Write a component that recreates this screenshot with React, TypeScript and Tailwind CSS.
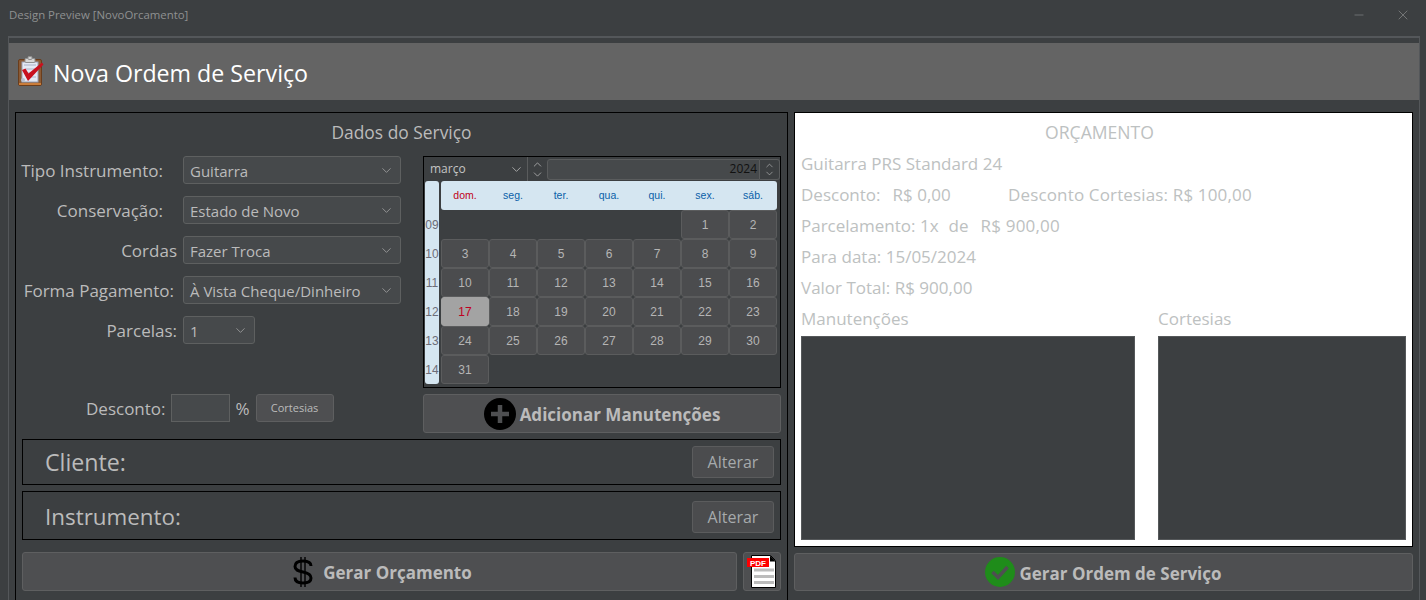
import { ChevronDown, ChevronUp, Minus, X } from "lucide-react";

const dayNames = ["dom.", "seg.", "ter.", "qua.", "qui.", "sex.", "sáb."];

const weeks: { no: string; days: (number | null)[] }[] = [
  { no: "09", days: [null, null, null, null, null, 1, 2] },
  { no: "10", days: [3, 4, 5, 6, 7, 8, 9] },
  { no: "11", days: [10, 11, 12, 13, 14, 15, 16] },
  { no: "12", days: [17, 18, 19, 20, 21, 22, 23] },
  { no: "13", days: [24, 25, 26, 27, 28, 29, 30] },
  { no: "14", days: [31, null, null, null, null, null, null] },
];

function ClipboardIcon() {
  return (
    <svg width="26" height="32" viewBox="0 0 26 32">
      <rect x="0.500" y="3.500" width="23" height="26" rx="1.500" fill="#8a5a35" stroke="#6a3d1c" />
      <path d="M1 28h22" stroke="#e08a3c" strokeWidth="1.500" />
      <rect x="4" y="6" width="16" height="20" fill="#e4e9f4" stroke="#9aa2b8" />
      <path d="M6 9h12M8 13h9M8 17h9M8 21h10" stroke="#aab2c8" strokeWidth="1" />
      <circle cx="5" cy="24" r="2" fill="#b9c0cf" />
      <rect x="7" y="2.500" width="10" height="4" rx="1" fill="#d8d8d8" stroke="#909090" />
      <rect x="10" y="0.500" width="4" height="3" rx="1" fill="#cfcfcf" stroke="#909090" />
      <path d="M4 14l3.500-1.500 3 5L24 6.500l1.500 2L10 25z" fill="#c8101e" />
    </svg>
  );
}

function PlusIcon() {
  return (
    <svg width="32" height="32" viewBox="0 0 32 32">
      <circle cx="16" cy="16" r="16" fill="#000" />
      <path d="M16 7v18M7 16h18" stroke="#4e4f51" strokeWidth="4.500" />
    </svg>
  );
}

function DollarIcon() {
  return (
    <svg width="22" height="32" viewBox="0 0 22 32" fill="none" stroke="#000">
      <path d="M19 10c0-3-3-5-8-5s-8 2-8 5.500 3 4.500 8 5.500 8 2.500 8 6-3 5-8 5-8-2-8-5.500" strokeWidth="3" />
      <path d="M9 1v30M13 1v30" strokeWidth="1.400" />
    </svg>
  );
}

function CheckIcon() {
  return (
    <svg width="30" height="30" viewBox="0 0 30 30">
      <circle cx="15" cy="15" r="15" fill="#1f8c1a" />
      <path d="M7.500 15l5.500 5.500L22.500 10" fill="none" stroke="#4e4f51" strokeWidth="3.500" />
    </svg>
  );
}

function PdfIcon() {
  return (
    <svg width="30" height="33" viewBox="0 0 30 33">
      <path d="M4.500 0.500h19l5 5v27h-24z" fill="#fff" stroke="#000" />
      <path d="M23 0.500l6 6h-6z" fill="#000" />
      <rect x="0" y="3" width="22" height="9" fill="#f00" />
      <text x="11" y="10.500" textAnchor="middle" fontSize="8" fontWeight="700" fill="#fff" fontFamily="Liberation Sans, sans-serif">
        PDF
      </text>
      <path d="M7 15h20M7 21.500h20M7 27.500h20" stroke="#bcbcbc" strokeWidth="3.200" />
    </svg>
  );
}

function Select({ value, className }: { value: string; className: string }) {
  return (
    <div className={`h-7 flex items-center justify-between pl-[6px] pr-[6px] bg-[#46494b] border border-[#5e6060] rounded-[3px] text-[15px] text-[#bbbbbb] ${className}`}>
      <span className="pt-[2px]">{value}</span>
      <ChevronDown size={15} strokeWidth={1.200} className="text-[#a9a9a9]" />
    </div>
  );
}

function FormRow({ label, value, labelClass, selectClass }: { label: string; value: string; labelClass: string; selectClass: string }) {
  return (
    <div className="flex items-center h-7">
      <div className={`w-[161px] pt-px text-[17px] text-[#bbbbbb] whitespace-nowrap flex justify-end ${labelClass}`}>{label}</div>
      <Select value={value} className={selectClass} />
    </div>
  );
}

function Calendar() {
  return (
    <div className="w-[358px] h-[232px] border border-black flex flex-col font-['Liberation_Sans',sans-serif]">
      {/* navigation */}
      <div className="h-6 flex items-center shrink-0 text-[#c4c4c4]">
        <div className="w-[104px] h-full flex items-center justify-between pl-[6px] pr-[3px] border-r border-[#5a5c5d] font-['Open_Sans',sans-serif] text-[12px]">
          <span>março</span>
          <ChevronDown size={15} strokeWidth={1.200} />
        </div>
        <div className="w-[19px] h-full flex flex-col items-center justify-center">
          <ChevronUp size={13} strokeWidth={1.300} className="-mb-[3px]" />
          <ChevronDown size={13} strokeWidth={1.300} />
        </div>
        <div className="w-[213px] h-[21px] flex items-center justify-end pr-[2px] bg-[#46494b] border border-[#5a5c5d] rounded-l-[3px] font-['Open_Sans',sans-serif] text-[12px] text-[#111111]">
          2024
        </div>
        <div className="w-[20px] h-[21px] flex flex-col items-center justify-center border-y border-r border-[#5a5c5d] rounded-r-[3px]">
          <ChevronUp size={13} strokeWidth={1.300} className="-mb-[3px]" />
          <ChevronDown size={13} strokeWidth={1.300} />
        </div>
      </div>
      {/* days */}
      <div className="flex">
        <div className="w-[14px] h-[203px] ml-px bg-[#d5e6f1] rounded-[3px] shrink-0 flex flex-col pt-[29px]">
          {weeks.map((w) => (
            <div key={w.no} className="h-[29px] flex items-center justify-center text-[12px] text-[#6c6c78]">
              {w.no}
            </div>
          ))}
        </div>
        <div className="ml-[2px] w-[336px]">
          <div className="grid grid-cols-7 h-[29px] bg-[#d5e6f1] rounded-[3px]">
            {dayNames.map((d, i) => (
              <div key={d} className={`flex items-center justify-center text-[10.500px] ${i === 0 ? "text-[#c00020]" : "text-[#0a5fa8]"}`}>
                {d}
              </div>
            ))}
          </div>
          {weeks.map((w) => (
            <div key={w.no} className="grid grid-cols-[repeat(7,48px)] h-[29px]">
              {w.days.map((d, i) =>
                d === null ? (
                  <div key={i} />
                ) : (
                  <div
                    key={i}
                    className={`flex items-center justify-center text-[12px] rounded-[3px] border ${
                      d === 17 ? "bg-[#a3a3a3] border-[#a3a3a3] text-[#c00020]" : "bg-[#4b4c4e] border-[#5b5c5d] text-[#b5b5b5]"
                    }`}
                  >
                    {d}
                  </div>
                ),
              )}
            </div>
          ))}
        </div>
      </div>
    </div>
  );
}

function BigButton({ children, className }: { children: React.ReactNode; className: string }) {
  return (
    <div className={`flex items-center justify-center bg-[#4e4f51] border border-[#5e5f60] rounded-[3px] text-[17px] font-bold text-[#bbbbbb] ${className}`}>
      {children}
    </div>
  );
}

function InfoBox({ label, className, labelClass }: { label: string; className: string; labelClass: string }) {
  return (
    <div className={`w-[759px] border border-black flex items-center justify-between pl-[22px] pr-[6px] ${className}`}>
      <span className={`text-[#bbbbbb] ${labelClass}`}>{label}</span>
      <div className="w-[82px] h-8 flex items-center justify-center bg-[#4b4c4e] border border-[#5b5c5d] rounded-[3px] text-[16px] text-[#a6aaac]">Alterar</div>
    </div>
  );
}

export default function App() {
  return (
    <div className="w-[1426px] h-[600px] overflow-hidden bg-[#3c3f41] flex flex-col font-['Open_Sans',sans-serif]">
      {/* title bar */}
      <div className="h-9 shrink-0 flex items-center justify-between pl-[9px] pr-[15px] pb-[6px]">
        <span className="text-[11.400px] text-[#8f9191]">Design Preview [NovoOrcamento]</span>
        <div className="flex items-center gap-[29px] text-[#8f9191]">
          <Minus size={14} strokeWidth={1} />
          <X size={16} strokeWidth={1} />
        </div>
      </div>

      {/* frame */}
      <div className="ml-2 w-[1412px] flex-1 border-t-2 border-x border-[#54575a] pt-[5px]">
        <div className="h-[57px] bg-[#646464] flex items-center pl-[9px] gap-[9px]">
          <ClipboardIcon />
          <span className="text-[23.200px] pt-[3px] text-white">Nova Ordem de Serviço</span>
        </div>

        <div className="flex pl-[6px] pt-3 gap-[6px]">
          {/* left panel */}
          <div className="w-[773px] h-[500px] shrink-0 border border-black">
            <h2 className="text-center text-[17.400px] leading-[38px] h-[43px] text-[#bbbbbb]">Dados do Serviço</h2>
            <div className="flex pl-[6px]">
              <div className="w-[401px] shrink-0 flex flex-col gap-3">
                <FormRow label="Tipo Instrumento:" value="Guitarra" labelClass="pr-5" selectClass="w-[218px]" />
                <FormRow label="Conservação:" value="Estado de Novo" labelClass="pr-5" selectClass="w-[218px]" />
                <FormRow label="Cordas" value="Fazer Troca" labelClass="pr-[6px]" selectClass="w-[218px]" />
                <FormRow label="Forma Pagamento:" value="À Vista Cheque/Dinheiro" labelClass="pr-[9px]" selectClass="w-[218px]" />
                <FormRow label="Parcelas:" value="1" labelClass="pr-[6px]" selectClass="w-[72px]" />
                <div className="flex items-center h-7 mt-[38px] pl-[64px] text-[#bbbbbb]">
                  <span className="text-[17px] pt-px mr-[5px]">Desconto:</span>
                  <div className="w-[59px] h-7 bg-[#46494b] border border-[#5e6060]" />
                  <span className="text-[17px] pt-px mx-[6px]">%</span>
                  <div className="w-[78px] h-7 flex items-center justify-center bg-[#4e4f51] border border-[#5e5f60] rounded-[3px] text-[11px]">Cortesias</div>
                </div>
              </div>
              <div>
                <Calendar />
                <BigButton className="w-[358px] h-[39px] mt-[6px] gap-[4px]">
                  <PlusIcon />
                  <span className="pt-[3px]">Adicionar Manutenções</span>
                </BigButton>
              </div>
            </div>
            <div className="pl-[6px] flex flex-col gap-[6px] mt-[6px]">
              <InfoBox label="Cliente:" className="h-[46px]" labelClass="text-[23.200px]" />
              <InfoBox label="Instrumento:" className="h-[49px] pt-[2px]" labelClass="text-[22.400px]" />
            </div>
            <div className="flex pl-[6px] gap-[6px] mt-3">
              <BigButton className="w-[715px] h-[39px] gap-[9px] pl-[5px]">
                <DollarIcon />
                <span className="pt-[3px]">Gerar Orçamento</span>
              </BigButton>
              <div className="w-[38px] h-[39px] flex items-center justify-center bg-[#4e4f51] border border-[#5e5f60] rounded-[3px]">
                <PdfIcon />
              </div>
            </div>
          </div>

          {/* right panel */}
          <div className="w-[619px] shrink-0">
            <div className="h-[435px] bg-white border border-black pl-[6px] pr-[6px] flex flex-col text-[17px] text-[#bdc1c1]">
              <div className="text-center h-[35px] leading-[38px] pr-[8px] text-[17.600px]">ORÇAMENTO</div>
              <div className="h-[31px] flex items-center">Guitarra PRS Standard 24</div>
              <div className="h-[31px] flex items-center">
                <span className="w-[207px] flex">
                  <span>Desconto:</span>
                  <span className="ml-[12px]">R$ 0,00</span>
                </span>
                <span className="tracking-[0.150px]">Desconto Cortesias: R$ 100,00</span>
              </div>
              <div className="h-[31px] flex items-center">
                <span>Parcelamento: 1x</span>
                <span className="ml-[10px]">de</span>
                <span className="ml-[12px] tracking-[0.200px]">R$ 900,00</span>
              </div>
              <div className="h-[31px] flex items-center">Para data: 15/05/2024</div>
              <div className="h-[31px] flex items-center">Valor Total: R$ 900,00</div>
              <div className="h-[31px] flex items-center">
                <span className="w-[357px]">Manutenções</span>
                <span>Cortesias</span>
              </div>
              <div className="flex mt-[2px]">
                <div className="w-[334px] h-[204px] bg-[#3c3f41] border border-[#55585a]" />
                <div className="w-[248px] h-[204px] ml-[23px] bg-[#3c3f41] border border-[#55585a]" />
              </div>
            </div>
            <BigButton className="w-[619px] h-[38px] mt-[6px] gap-[4px]">
              <CheckIcon />
              <span className="pt-[3px]">Gerar Ordem de Serviço</span>
            </BigButton>
          </div>
        </div>
      </div>
    </div>
  );
}
